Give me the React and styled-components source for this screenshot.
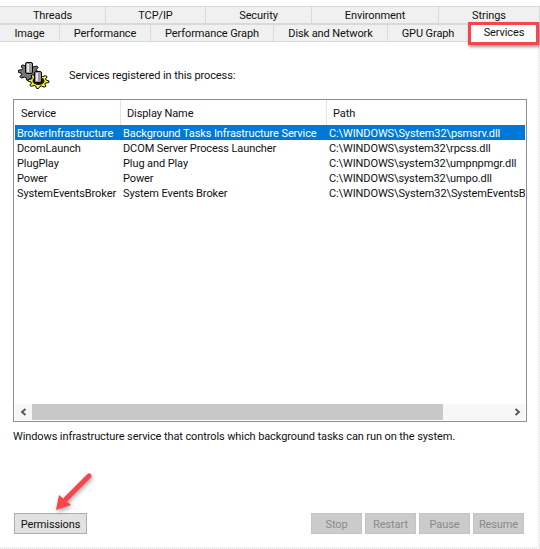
import styled, { createGlobalStyle } from "styled-components";

const GlobalStyle = createGlobalStyle`
  html, body {
    margin: 0;
    padding: 0;
    background: #fff;
  }
`;

const dither = (a, b) => `repeating-conic-gradient(${a} 0 25%, ${b} 0 50%) 0 0 / 2px 2px`;

const Page = styled.div`
  position: relative;
  width: 540px;
  height: 549px;
  overflow: hidden;
  background: #fff;
  color: #111;
  font-family: Roboto, "Open Sans", sans-serif;
  font-size: 11px;
  letter-spacing: -0.1px;
  box-sizing: border-box;
  padding-top: 6px;
  *, *::before { box-sizing: border-box; }
`;

const TabRow = styled.div`
  display: flex;
  height: 18px;
`;

const Tab = styled.div`
  width: ${(p) => p.$w}px;
  flex: none;
  display: flex;
  align-items: center;
  justify-content: center;
  background: ${(p) => (p.$active ? "#fff" : dither("#f4f4f4", "#ececec"))};
  border-top: 1px solid #d9d9d9;
  border-right: 1px solid #d9d9d9;
  border-bottom: ${(p) => (p.$active ? "none" : "1px solid #d9d9d9")};
  padding-top: ${(p) => (p.$active ? 0 : 1)}px;
  padding-bottom: ${(p) => (p.$active ? 3 : 0)}px;
`;

const Body = styled.div`
  padding: 0 13px;
`;

const Heading = styled.div`
  display: flex;
  align-items: center;
  height: 57px;
  padding: 9px 0 0 5px;
  gap: 19px;
`;

const Table = styled.div`
  width: 514px;
  height: 323px;
  border: 1px solid #8e8f94;
  padding: 0 1px;
  display: flex;
  flex-direction: column;
  overflow: hidden;
`;

const HeaderRow = styled.div`
  display: grid;
  grid-template-columns: 106px 206px 1fr;
  height: 25px;
  flex: none;
`;

const HeaderCell = styled.div`
  display: flex;
  align-items: center;
  padding: 1px 0 0 6px;
  border-right: 1px solid #e4e4e4;
  &:last-child { border-right: none; }
`;

const Rows = styled.div`
  flex: 1;
`;

const Row = styled.div`
  display: grid;
  grid-template-columns: 106px 206px 1fr;
  height: 15px;
  line-height: 15px;
  color: ${(p) => (p.$selected ? "#fff" : "#111")};
  background: ${(p) => (p.$selected ? "#0078d7" : "transparent")};
`;

const Cell = styled.div`
  height: 15px;
  padding: 1px 0 0 2px;
  white-space: nowrap;
  overflow: hidden;
`;

const ScrollBar = styled.div`
  display: flex;
  height: 16px;
  flex: none;
  margin-bottom: 1px;
  background: ${dither("#f3f3f3", "#fafafa")};
`;

const ScrollButton = styled.div`
  width: 17px;
  flex: none;
  display: flex;
  align-items: center;
  justify-content: center;
`;

const Thumb = styled.div`
  width: 411px;
  background: ${dither("#cbcbcb", "#c6c6c6")};
`;

const Spacer = styled.div`
  flex: 1;
`;

const Description = styled.div`
  margin-top: 7px;
  height: 18px;
  line-height: 16px;
`;

const Footer = styled.div`
  display: flex;
  justify-content: space-between;
  margin-top: 66px;
  padding: 0 3px 0 1px;
`;

const ButtonGroup = styled.div`
  display: flex;
  gap: 3px;
`;

const Button = styled.div`
  width: ${(p) => p.$w}px;
  height: 21px;
  padding-top: 1px;
  display: flex;
  align-items: center;
  justify-content: center;
  border: 1px solid ${(p) => (p.$disabled ? "#c4c4c4" : "#adadad")};
  color: ${(p) => (p.$disabled ? "#8a8a8a" : "#111")};
  background: ${(p) => (p.$disabled ? dither("#cecece", "#c8c8c8") : dither("#e3e3e3", "#e0e0e0"))};
`;

const BottomEdge = styled.div`
  position: absolute;
  left: 0;
  right: 0;
  bottom: 0;
  height: 2px;
  background: ${dither("#e6e6e6", "#fafafa")};
`;

const RightEdge = styled.div`
  position: absolute;
  top: 42px;
  bottom: 0;
  right: 0;
  width: 2px;
  background: ${dither("#e6e6e6", "#fafafa")};
`;

const RedBox = styled.div`
  position: absolute;
  left: 468px;
  top: 22px;
  width: 71px;
  height: 23px;
  border: 3px solid #f8454d;
  box-shadow: 1px 2px 3px rgba(0, 0, 0, 0.4);
`;

const ArrowMark = styled.svg`
  position: absolute;
  left: 50px;
  top: 470px;
  width: 46px;
  height: 46px;
  filter: drop-shadow(1px 2px 2px rgba(0, 0, 0, 0.35));
`;

// toothed outline, squashed vertically like the old isometric gear icons
const gearPoints = (cx, cy, rx, ry, teeth) => {
  const pts = [];
  const step = (Math.PI * 2) / (teeth * 4);
  for (let i = 0; i < teeth * 4; i++) {
    const r = i % 4 < 2 ? 1 : 0.72;
    const a = i * step;
    pts.push(`${(cx + Math.cos(a) * rx * r).toFixed(1)},${(cy + Math.sin(a) * ry * r).toFixed(1)}`);
  }
  return pts.join(" ");
};

const Post = ({ x, y, h }) => (
  <g>
    <rect x={x} y={y} width="7" height={h} rx="1.5" fill="#9a9a9a" stroke="#000" />
    <rect x={x + 1.5} y={y + 1.5} width="2" height={h - 3} fill="#e6e6e6" />
  </g>
);

const GearIcon = () => (
  <svg width="32" height="30" viewBox="0 0 32 30">
    <polygon points={gearPoints(11, 12, 11, 8.5, 8)} fill="#777" stroke="#000" />
    <Post x={7.5} y={2.5} h={11} />
    <polygon points={gearPoints(20.5, 21, 10.5, 7.5, 8)} fill="#f6f02c" stroke="#000" />
    <ellipse cx="20.5" cy="21" rx="6" ry="4" fill="#1a1a00" />
    <Post x={16.5} y={11.5} h={11} />
  </svg>
);

const Chevron = ({ flip }) => (
  <svg width="8" height="8" viewBox="0 0 8 8" style={{ transform: flip ? "scaleX(-1)" : "none" }}>
    <path d="M5.5 1L2 4l3.5 3" fill="none" stroke="#555" strokeWidth="1.8" />
  </svg>
);

const topTabs = [
  ["Threads", 106],
  ["TCP/IP", 100],
  ["Security", 106],
  ["Environment", 127],
  ["Strings", 101],
];

const bottomTabs = [
  ["Image", 60],
  ["Performance", 91],
  ["Performance Graph", 123],
  ["Disk and Network", 114],
  ["GPU Graph", 81],
  ["Services", 71, true],
];

const services = [
  ["BrokerInfrastructure", "Background Tasks Infrastructure Service", "C:\\WINDOWS\\System32\\psmsrv.dll"],
  ["DcomLaunch", "DCOM Server Process Launcher", "C:\\WINDOWS\\system32\\rpcss.dll"],
  ["PlugPlay", "Plug and Play", "C:\\WINDOWS\\system32\\umpnpmgr.dll"],
  ["Power", "Power", "C:\\WINDOWS\\system32\\umpo.dll"],
  ["SystemEventsBroker", "System Events Broker", "C:\\WINDOWS\\System32\\SystemEventsBroker.dll"],
];

export default function App() {
  return (
    <Page>
      <GlobalStyle />
      <TabRow>
        {topTabs.map(([label, w]) => (
          <Tab key={label} $w={w}>{label}</Tab>
        ))}
      </TabRow>
      <TabRow>
        {bottomTabs.map(([label, w, active]) => (
          <Tab key={label} $w={w} $active={active}>{label}</Tab>
        ))}
      </TabRow>
      <Body>
        <Heading>
          <GearIcon />
          <span>Services registered in this process:</span>
        </Heading>
        <Table>
          <HeaderRow>
            <HeaderCell>Service</HeaderCell>
            <HeaderCell>Display Name</HeaderCell>
            <HeaderCell>Path</HeaderCell>
          </HeaderRow>
          <Rows>
            {services.map((s, i) => (
              <Row key={s[0]} $selected={i === 0}>
                <Cell>{s[0]}</Cell>
                <Cell>{s[1]}</Cell>
                <Cell>{s[2]}</Cell>
              </Row>
            ))}
          </Rows>
          <ScrollBar>
            <ScrollButton><Chevron /></ScrollButton>
            <Thumb />
            <Spacer />
            <ScrollButton><Chevron flip /></ScrollButton>
          </ScrollBar>
        </Table>
        <Description>
          Windows infrastructure service that controls which background tasks can run on the system.
        </Description>
        <Footer>
          <Button $w={73}>Permissions</Button>
          <ButtonGroup>
            <Button $w={51} $disabled>Stop</Button>
            <Button $w={51} $disabled>Restart</Button>
            <Button $w={51} $disabled>Pause</Button>
            <Button $w={51} $disabled>Resume</Button>
          </ButtonGroup>
        </Footer>
      </Body>
      <BottomEdge />
      <RightEdge />
      <RedBox />
      <ArrowMark viewBox="0 0 46 46">
        <path d="M39 6L16 29" stroke="#f8454d" strokeWidth="5" strokeLinecap="round" fill="none" />
        <path d="M6 40L9 25L21 35Z" fill="#f8454d" />
      </ArrowMark>
    </Page>
  );
}
